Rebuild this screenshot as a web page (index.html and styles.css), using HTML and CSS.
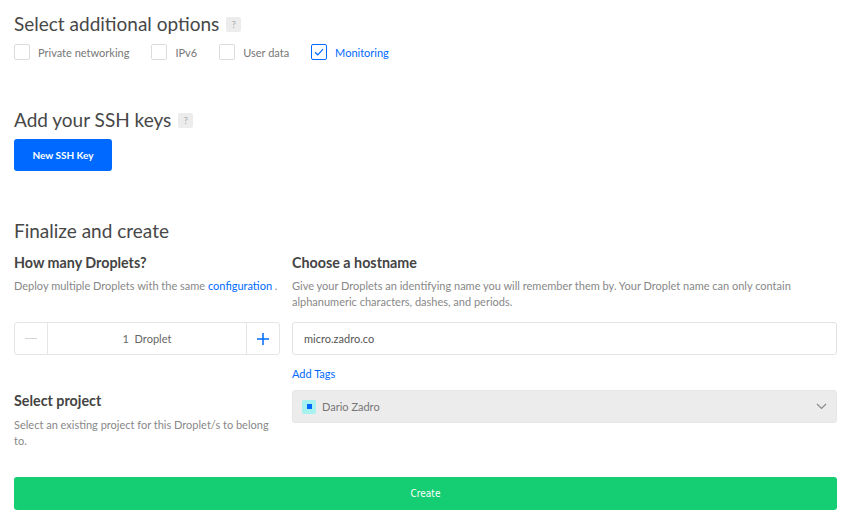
FILE: index.html
```html
<!DOCTYPE html>
<html>
<head>
<meta charset="utf-8">
<link rel="stylesheet" href="styles.css">
</head>
<body>
<div class="page">
  <section class="section options">
    <h2 class="heading">Select additional options <span class="help">?</span></h2>
    <div class="checks">
      <label class="check"><span class="box"></span><span class="check-label">Private networking</span></label>
      <label class="check"><span class="box"></span><span class="check-label">IPv6</span></label>
      <label class="check"><span class="box"></span><span class="check-label">User data</span></label>
      <label class="check checked"><span class="box"><svg width="10" height="8" viewBox="0 0 10 8"><path d="M1 4.2 L3.8 6.8 L9 1.2" fill="none" stroke="#0069ff" stroke-width="1.2"/></svg></span><span class="check-label">Monitoring</span></label>
    </div>
  </section>

  <section class="section ssh">
    <h2 class="heading">Add your SSH keys <span class="help">?</span></h2>
    <button class="btn-blue">New SSH Key</button>
  </section>

  <section class="section finalize">
    <h2 class="heading">Finalize and create</h2>
    <div class="grid">
      <div class="cell">
        <h3 class="sub">How many Droplets?</h3>
        <p class="desc">Deploy multiple Droplets with the same <a class="link">configuration</a> .</p>
      </div>
      <div class="cell">
        <h3 class="sub">Choose a hostname</h3>
        <p class="desc">Give your Droplets an identifying name you will remember them by. Your Droplet name can only contain alphanumeric characters, dashes, and periods.</p>
      </div>
      <div class="stepper">
        <span class="step minus"><svg width="12" height="2" viewBox="0 0 12 2"><rect width="12" height="1" fill="#d4d4d4"/></svg></span>
        <span class="count">1&nbsp; Droplet</span>
        <span class="step plus"><svg width="12" height="12" viewBox="0 0 12 12"><rect x="0" y="5.25" width="12" height="1.5" fill="#0069ff"/><rect x="5.25" y="0" width="1.5" height="12" fill="#0069ff"/></svg></span>
      </div>
      <div class="input">micro.zadro.co</div>
      <div class="cell">
        <h3 class="sub project-title">Select project</h3>
        <p class="desc project-desc">Select an existing project for this Droplet/s to belong to.</p>
      </div>
      <div class="cell">
        <a class="link tags">Add Tags</a>
        <div class="select">
          <span class="proj-icon"><span class="proj-dot"></span></span>
          <span class="proj-name">Dario Zadro</span>
          <svg class="chev" width="11" height="7" viewBox="0 0 11 7"><path d="M1 1 L5.5 5.5 L10 1" fill="none" stroke="#8a8a8a" stroke-width="1.2"/></svg>
        </div>
      </div>
    </div>
    <button class="btn-green">Create</button>
  </section>
</div>
</body>
</html>
```
FILE: styles.css
```css
* { box-sizing: border-box; }
html, body { margin: 0; padding: 0; background: #fff; }
body { font-family: "Lato", "Open Sans", sans-serif; color: #444; }
.page { padding: 11px 18px 0 14px; }
.heading {
  margin: 0;
  font-size: 19px;
  font-weight: 400;
  color: #474747;
  line-height: 26px;
  display: flex;
  align-items: center;
}
.help {
  display: inline-flex;
  align-items: center;
  justify-content: center;
  width: 15px;
  height: 15px;
  margin-left: 7px;
  margin-top: 1px;
  background: #ececec;
  border-radius: 2px;
  color: #aaa;
  font-size: 9px;
  font-weight: 400;
}
.checks { display: flex; margin-top: 6px; height: 18px; align-items: center; }
.check { display: flex; align-items: center; margin-right: 22px; }
.box {
  width: 16px; height: 16px;
  border: 1px solid #dcdcdc;
  border-radius: 2px;
  display: flex; align-items: center; justify-content: center;
}
.check-label { margin-left: 8px; font-size: 11px; color: #777; }
.checked .box { border-color: #0069ff; }
.checked .check-label { color: #0069ff; }
.ssh { margin-top: 46px; }
.btn-blue {
  display: block;
  margin-top: 6px;
  width: 98px; height: 32px;
  border: 0; border-radius: 3px;
  background: #0069ff;
  color: #fff;
  font-family: inherit;
  font-size: 10px;
  font-weight: 700;
}
.finalize { margin-top: 47px; }
.grid {
  display: grid;
  grid-template-columns: 266px 1fr;
  column-gap: 12px;
  margin-top: 10px;
  align-items: start;
}
.sub { margin: 0; font-size: 14.3px; font-weight: 700; color: #444; line-height: 17px; }
.desc { margin: 7px 0 0; font-size: 11px; color: #888; line-height: 16px; }
.link { color: #0069ff; }
.stepper {
  margin-top: 12px;
  height: 33px;
  border: 1px solid #e6e6e6;
  border-radius: 3px;
  display: flex;
  align-items: stretch;
}
.step { width: 33px; display: flex; align-items: center; justify-content: center; }
.minus { border-right: 1px solid #e6e6e6; }
.plus { border-left: 1px solid #e6e6e6; }
.count { flex: 1; display: flex; align-items: center; justify-content: center; font-size: 11px; color: #666; }
.project-title { margin-top: 37px; }
.project-desc { margin-top: 8px; }
.input {
  margin-top: 12px;
  height: 33px;
  border: 1px solid #e3e3e3;
  border-radius: 3px;
  display: flex; align-items: center;
  padding-left: 11px;
  font-size: 11px; color: #555;
}
.tags { display: block; font-size: 11px; margin-top: 11px; line-height: 16px; }
.select {
  margin-top: 8px;
  height: 33px;
  border: 1px solid #e6e6e6;
  border-radius: 3px;
  background: #ececec;
  display: flex; align-items: center;
  padding: 0 9px 0 9px;
}
.proj-icon {
  width: 14px; height: 14px;
  background: #a7f1ee;
  border-radius: 2px;
  display: flex; align-items: center; justify-content: center;
}
.proj-dot { width: 5px; height: 5px; background: #0069ff; }
.proj-name { margin-left: 6px; font-size: 11px; color: #777; flex: 1; }
.btn-green {
  display: block;
  margin-top: 28px;
  width: 100%;
  height: 33px;
  border: 0; border-radius: 3px;
  background: #15cd72;
  color: #fff;
  font-family: "DejaVu Sans Condensed", "DejaVu Sans", sans-serif;
  font-size: 10px;
}
```
